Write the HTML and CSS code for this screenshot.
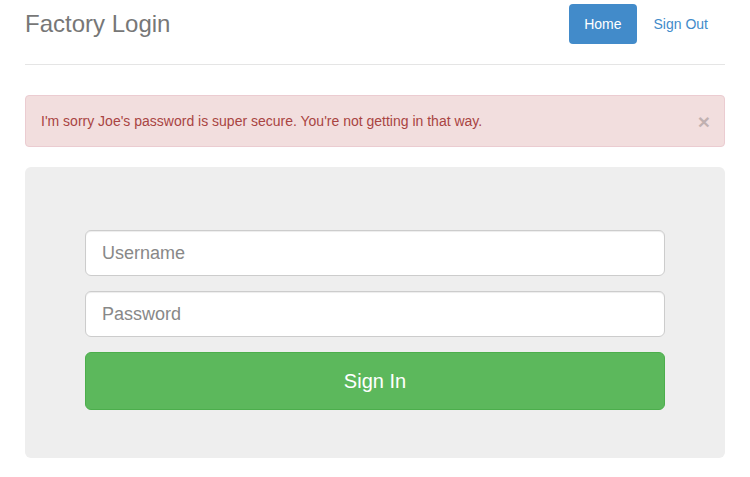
FILE: index.html
```html
<!DOCTYPE html>
<html>
<head>
<meta charset="utf-8">
<link rel="stylesheet" href="styles.css">
</head>
<body>
<div class="container">
  <div class="header">
    <h3 class="brand">Factory Login</h3>
    <ul class="nav">
      <li><a class="pill active" href="#">Home</a></li>
      <li><a class="pill" href="#">Sign Out</a></li>
    </ul>
  </div>
  <div class="alert">
    <span>I'm sorry Joe's password is super secure. You're not getting in that way.</span>
    <button class="close" type="button">×</button>
  </div>
  <div class="jumbotron">
    <form class="form">
      <input class="field" type="text" placeholder="Username">
      <input class="field" type="password" placeholder="Password">
      <button class="btn-signin" type="button">Sign In</button>
    </form>
  </div>
</div>
</body>
</html>
```
FILE: styles.css
```css
* { box-sizing: border-box; }
html, body { margin: 0; padding: 0; }
body {
  font-family: "Liberation Sans", Arial, sans-serif;
  font-size: 14px;
  line-height: 1.428571;
  color: #333;
  background: #fff;
}
.container { padding: 4px 25px 20px; }
.header {
  display: flex;
  justify-content: space-between;
  align-items: flex-start;
  padding-bottom: 20px;
  border-bottom: 1px solid #e5e5e5;
}
.brand {
  margin: 0;
  font-size: 24px;
  font-weight: normal;
  line-height: 40px;
  color: #777;
}
.nav { list-style: none; margin: 0 2px 0 0; padding: 0; display: flex; gap: 2px; }
.pill {
  display: block;
  padding: 10px 15px;
  line-height: 20px;
  border-radius: 4px;
  color: #428bca;
  text-decoration: none;
}
.pill.active { background: #428bca; color: #fff; }
.alert {
  margin-top: 30px;
  margin-bottom: 20px;
  padding: 15px 35px 15px 15px;
  position: relative;
  background: #f2dede;
  border: 1px solid #ebccd1;
  border-radius: 4px;
  color: #a94442;
  line-height: 20px;
}
.close {
  position: absolute;
  top: 15px;
  right: 14px;
  padding: 0;
  border: 0;
  background: transparent;
  font-family: "Liberation Sans", Arial, sans-serif;
  font-size: 21px;
  font-weight: bold;
  line-height: 21px;
  color: #000;
  opacity: 0.2;
  cursor: pointer;
}
.jumbotron {
  background: #eee;
  border-radius: 6px;
  padding: 63px 60px 48px;
}
.form { display: flex; flex-direction: column; gap: 15px; }
.field {
  display: block;
  width: 100%;
  height: 46px;
  padding: 10px 16px;
  font-family: "Liberation Sans", Arial, sans-serif;
  font-size: 18px;
  color: #555;
  background: #fff;
  border: 1px solid #ccc;
  border-radius: 6px;
  box-shadow: inset 0 1px 1px rgba(0,0,0,.075);
}
.field::placeholder { color: #888; }
.btn-signin {
  display: block;
  width: 100%;
  height: 58px;
  font-family: "Liberation Sans", Arial, sans-serif;
  font-size: 20px;
  color: #fff;
  background: #5cb85c;
  border: 1px solid #4cae4c;
  border-radius: 6px;
  cursor: pointer;
}
```
